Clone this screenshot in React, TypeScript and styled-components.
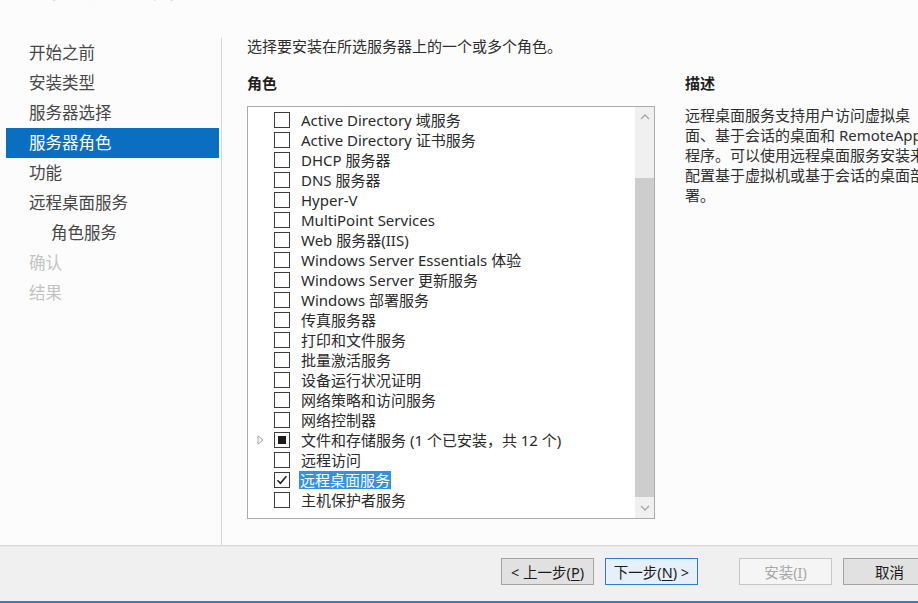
import React from 'react';
import styled, { createGlobalStyle } from 'styled-components';

const GlobalStyle = createGlobalStyle`
  html, body {
    margin: 0;
    padding: 0;
    background: #fcfcfc;
  }
  body {
    font-family: 'Noto Sans', 'Noto Sans CJK SC', sans-serif;
    color: #2b2b2b;
  }
`;

const FONT = `'Noto Sans', 'Noto Sans CJK SC', sans-serif`;

const NAV_ITEMS = [
  { label: '开始之前' },
  { label: '安装类型' },
  { label: '服务器选择' },
  { label: '服务器角色', selected: true },
  { label: '功能' },
  { label: '远程桌面服务' },
  { label: '角色服务', indent: true },
  { label: '确认', disabled: true },
  { label: '结果', disabled: true },
];

type RoleState = 'off' | 'on' | 'partial';

const ROLES: { label: string; state?: RoleState; expandable?: boolean; highlight?: boolean }[] = [
  { label: 'Active Directory 域服务' },
  { label: 'Active Directory 证书服务' },
  { label: 'DHCP 服务器' },
  { label: 'DNS 服务器' },
  { label: 'Hyper-V' },
  { label: 'MultiPoint Services' },
  { label: 'Web 服务器(IIS)' },
  { label: 'Windows Server Essentials 体验' },
  { label: 'Windows Server 更新服务' },
  { label: 'Windows 部署服务' },
  { label: '传真服务器' },
  { label: '打印和文件服务' },
  { label: '批量激活服务' },
  { label: '设备运行状况证明' },
  { label: '网络策略和访问服务' },
  { label: '网络控制器' },
  { label: '文件和存储服务 (1 个已安装，共 12 个)', state: 'partial', expandable: true },
  { label: '远程访问' },
  { label: '远程桌面服务', state: 'on', highlight: true },
  { label: '主机保护者服务' },
];

const DESCRIPTION = [
  '远程桌面服务支持用户访问虚拟桌',
  '面、基于会话的桌面和 RemoteApp',
  '程序。可以使用远程桌面服务安装来',
  '配置基于虚拟机或基于会话的桌面部',
  '署。',
];

const Page = styled.div`
  width: 918px;
  height: 603px;
  display: flex;
  flex-direction: column;
  overflow: hidden;
  background: #fcfcfc;
`;

const TitleStrip = styled.div`
  height: 4px;
  flex-shrink: 0;
  overflow: hidden;
  display: flex;
  align-items: flex-end;
  padding-left: 6px;
`;

const TitleText = styled.div`
  font-family: ${FONT};
  font-size: 29px;
  line-height: 29px;
  color: #3c88d0;
  white-space: nowrap;
  transform: translateY(-3px);
`;

const Body = styled.div`
  height: 541px;
  flex-shrink: 0;
  display: flex;
  padding-top: 34px;
  box-sizing: border-box;
`;

const Nav = styled.div`
  width: 221px;
  padding-left: 6px;
  box-sizing: border-box;
  display: flex;
  flex-direction: column;
`;

const NavItem = styled.div<{ $selected?: boolean; $disabled?: boolean; $indent?: boolean }>`
  height: 30px;
  line-height: 30px;
  width: 213px;
  padding-left: ${(p) => (p.$indent ? 45 : 23)}px;
  box-sizing: border-box;
  font-size: 16.5px;
  white-space: nowrap;
  background: ${(p) => (p.$selected ? '#0b6fc1' : 'transparent')};
  color: ${(p) => (p.$selected ? '#ffffff' : p.$disabled ? '#c3c3c3' : '#474747')};
`;

const Divider = styled.div`
  width: 1px;
  background: #d6d6d6;
`;

const Content = styled.div`
  flex: 1;
  padding-left: 25px;
  display: flex;
  flex-direction: column;
  min-width: 0;
`;

const Instruction = styled.div`
  font-size: 15px;
  line-height: 16px;
  color: #2e2e2e;
  white-space: nowrap;
`;

const Columns = styled.div`
  margin-top: 21px;
  display: grid;
  grid-template-columns: 408px 240px;
  column-gap: 30px;
  row-gap: 15px;
`;

const Heading = styled.div`
  font-size: 15px;
  line-height: 16px;
  font-weight: bold;
  color: #1f1f1f;
`;

const ListBox = styled.div`
  height: 413px;
  border: 1px solid #ababab;
  box-sizing: border-box;
  display: flex;
  background: #ffffff;
`;

const ListItems = styled.div`
  flex: 1;
  padding-top: 3px;
  display: flex;
  flex-direction: column;
`;

const Row = styled.div`
  height: 20px;
  display: flex;
  align-items: center;
  padding-left: 9px;
`;

const Expander = styled.div`
  width: 17px;
  height: 20px;
  display: flex;
  align-items: center;
`;

const Box = styled.div`
  width: 16px;
  height: 16px;
  border: 1px solid #3c3c3c;
  box-sizing: border-box;
  background: #ffffff;
  display: flex;
  align-items: center;
  justify-content: center;
  flex-shrink: 0;
`;

const Fill = styled.div`
  width: 8px;
  height: 8px;
  background: #1a1a1a;
`;

const RowLabel = styled.span<{ $highlight?: boolean }>`
  font-size: 15px;
  line-height: 18px;
  padding: 0 1px;
  white-space: nowrap;
  color: ${(p) => (p.$highlight ? '#ffffff' : '#2a2a2a')};
  background: ${(p) => (p.$highlight ? '#3390e6' : 'transparent')};
  margin-left: ${(p) => (p.$highlight ? 9 : 10)}px;
`;

const ScrollBar = styled.div`
  width: 19px;
  background: #f0f0f0;
  display: flex;
  flex-direction: column;
`;

const ScrollButton = styled.div<{ $h: number }>`
  height: ${(p) => p.$h}px;
  display: flex;
  align-items: center;
  justify-content: center;
`;

const ScrollTrack = styled.div<{ $h: number }>`
  height: ${(p) => p.$h}px;
`;

const ScrollThumb = styled.div`
  flex: 1;
  background: #cdcdcd;
`;

const Description = styled.div`
  display: flex;
  flex-direction: column;
  margin-top: -1px;
`;

const DescLine = styled.div`
  font-size: 15px;
  line-height: 20px;
  color: #2e2e2e;
  white-space: nowrap;
`;

const Footer = styled.div`
  flex: 1;
  background: #f0f0f0;
  border-top: 1px solid #d9d9d9;
  box-shadow: inset 0 1px 1px rgba(0, 0, 0, 0.03);
  border-bottom: 2px solid #2b82d6;
  display: flex;
  align-items: flex-start;
  padding: 12px 0 0 501px;
  box-sizing: border-box;
  overflow: hidden;
`;

const Button = styled.div<{ $variant?: 'focus' | 'disabled'; $gap?: number }>`
  width: 93px;
  height: 27px;
  flex-shrink: 0;
  margin-left: ${(p) => p.$gap ?? 0}px;
  box-sizing: border-box;
  display: flex;
  align-items: center;
  justify-content: center;
  font-size: 14.5px;
  white-space: nowrap;
  border: 1px solid
    ${(p) => (p.$variant === 'focus' ? '#2d7cd0' : p.$variant === 'disabled' ? '#c6c6c6' : '#a3a3a3')};
  background: ${(p) => (p.$variant === 'focus' ? '#e6f0fa' : p.$variant === 'disabled' ? '#f5f5f5' : '#e1e1e1')};
  color: ${(p) => (p.$variant === 'disabled' ? '#a8a8a8' : '#1a1a1a')};
  u {
    text-underline-offset: 2px;
  }
`;

function Chevron({ up }: { up?: boolean }) {
  return (
    <svg width="10" height="6" viewBox="0 0 10 6">
      <path
        d={up ? 'M1 5 L5 1 L9 5' : 'M1 1 L5 5 L9 1'}
        fill="none"
        stroke="#a6a6a6"
        strokeWidth="1.3"
      />
    </svg>
  );
}

function CheckMark() {
  return (
    <svg width="14" height="14" viewBox="0 0 14 14">
      <path d="M2.5 7.2 L5.4 10.3 L11.4 3.2" fill="none" stroke="#1a1a1a" strokeWidth="1.5" />
    </svg>
  );
}

function ExpandArrow() {
  return (
    <svg width="7" height="10" viewBox="0 0 7 10">
      <path d="M1 1 L6 5 L1 9 Z" fill="none" stroke="#a0a0a0" strokeWidth="1" />
    </svg>
  );
}

export default function App() {
  return (
    <Page>
      <GlobalStyle />
      <TitleStrip>
        <TitleText>选择服务器角色</TitleText>
      </TitleStrip>

      <Body>
        {/*------------ Wizard steps -----------*/}
        <Nav>
          {NAV_ITEMS.map((item) => (
            <NavItem
              key={item.label}
              $selected={item.selected}
              $disabled={item.disabled}
              $indent={item.indent}
            >
              {item.label}
            </NavItem>
          ))}
        </Nav>
        <Divider />

        <Content>
          <Instruction>选择要安装在所选服务器上的一个或多个角色。</Instruction>

          <Columns>
            <Heading>角色</Heading>
            <Heading>描述</Heading>

            {/*------------ Roles list -----------*/}
            <ListBox>
              <ListItems>
                {ROLES.map((role) => (
                  <Row key={role.label}>
                    <Expander>{role.expandable && <ExpandArrow />}</Expander>
                    <Box>
                      {role.state === 'partial' && <Fill />}
                      {role.state === 'on' && <CheckMark />}
                    </Box>
                    <RowLabel $highlight={role.highlight}>{role.label}</RowLabel>
                  </Row>
                ))}
              </ListItems>
              <ScrollBar>
                <ScrollButton $h={20}>
                  <Chevron up />
                </ScrollButton>
                <ScrollTrack $h={51} />
                <ScrollThumb />
                <ScrollButton $h={21}>
                  <Chevron />
                </ScrollButton>
              </ScrollBar>
            </ListBox>

            {/*------------ Description -----------*/}
            <Description>
              {DESCRIPTION.map((line) => (
                <DescLine key={line}>{line}</DescLine>
              ))}
            </Description>
          </Columns>
        </Content>
      </Body>

      <Footer>
        <Button>
          &lt; 上一步(<u>P</u>)
        </Button>
        <Button $variant="focus" $gap={11}>
          下一步(<u>N</u>) &gt;
        </Button>
        <Button $variant="disabled" $gap={41}>
          安装(<u>I</u>)
        </Button>
        <Button $gap={11}>取消</Button>
      </Footer>
    </Page>
  );
}
